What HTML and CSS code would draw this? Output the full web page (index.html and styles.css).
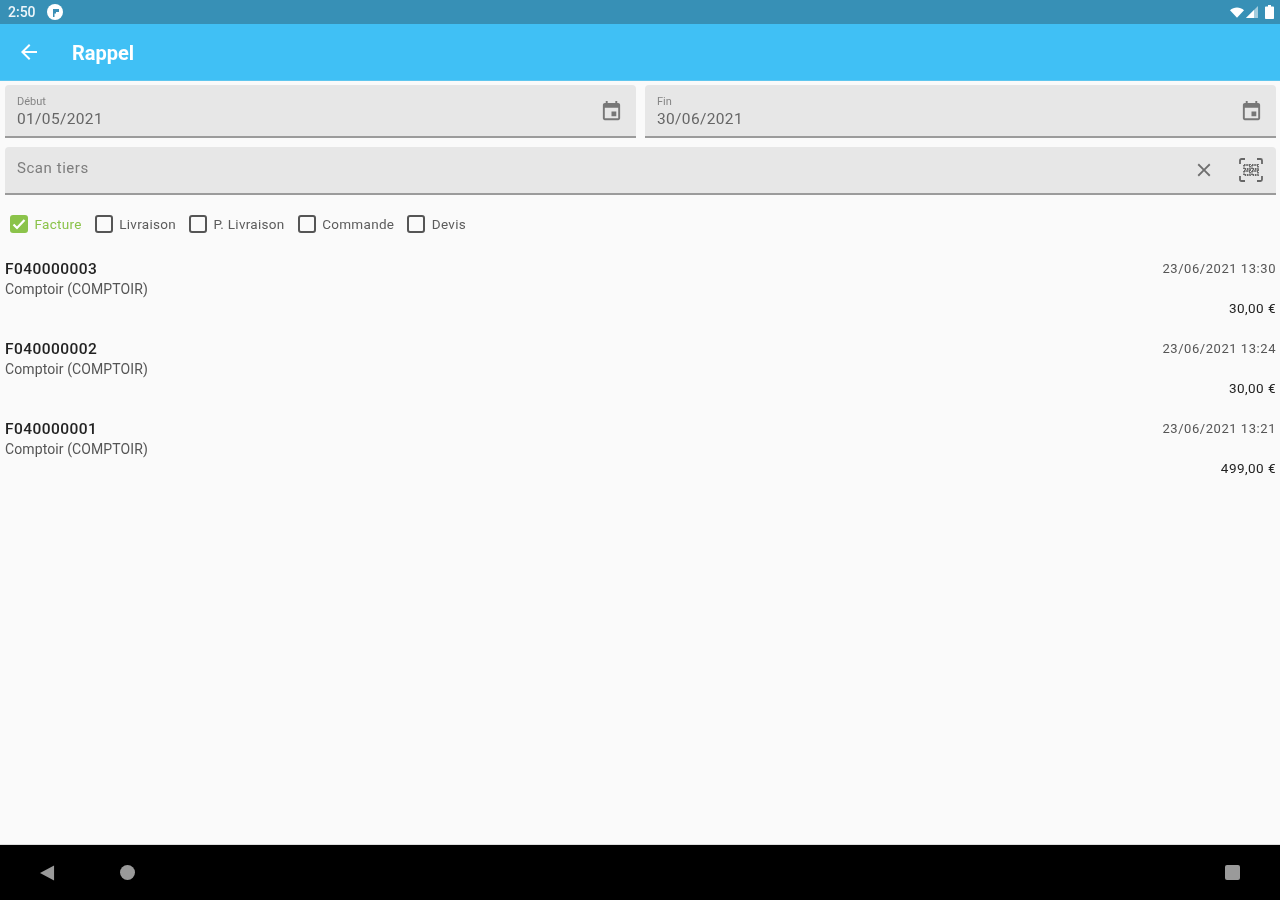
FILE: index.html
```html
<!DOCTYPE html>
<html lang="fr">
<head>
<meta charset="utf-8">
<title>Rappel</title>
<link rel="stylesheet" href="styles.css">
</head>
<body>
<div class="screen">
  <header class="status">
    <div class="status-left">
      <span class="clock">2:50</span>
      <svg class="status-logo" viewBox="0 0 16 16"><circle cx="8" cy="8" r="8" fill="#fff"/><path d="M6 13V5h6v3H9v1.500H7.500V13z" fill="#3b8fb6"/></svg>
    </div>
    <div class="status-right">
      <svg class="ic-wifi" viewBox="0 0 16 12"><path d="M0 3.500C4.500-.8 11.500-.8 16 3.500L8 12z" fill="#fff"/></svg>
      <svg class="ic-signal" viewBox="0 0 12 12"><path d="M12 0v12H0z" fill="#fff" opacity=".55"/><path d="M8 4v8H0z" fill="#fff"/></svg>
      <svg class="ic-batt" viewBox="0 0 9 14"><path d="M3 0h3v1.500h2.200q.8 0 .8.800V13.200q0 .8-.8.800H.8q-.8 0-.8-.8V2.300q0-.8.800-.8H3z" fill="#fff"/></svg>
    </div>
  </header>
  <div class="appbar">
    <svg class="back" viewBox="0 0 24 24"><path d="M20 11H7.830l5.590-5.590L12 4l-8 8 8 8 1.410-1.410L7.830 13H20z" fill="#fff"/></svg>
    <h1 class="title">Rappel</h1>
  </div>
  <main class="content">
    <div class="dates">
      <div class="field">
        <div class="field-text">
          <span class="field-label">Début</span>
          <span class="field-value">01/05/2021</span>
        </div>
        <svg class="ic-cal" viewBox="0 0 24 24"><path d="M17 12h-5v5h5v-5zM16 1v2H8V1H6v2H5c-1.110 0-1.990.9-1.990 2L3 19c0 1.100.89 2 2 2h14c1.100 0 2-.9 2-2V5c0-1.100-.9-2-2-2h-1V1h-2zm3 18H5V8h14v11z" fill="#777"/></svg>
      </div>
      <div class="field">
        <div class="field-text">
          <span class="field-label">Fin</span>
          <span class="field-value">30/06/2021</span>
        </div>
        <svg class="ic-cal" viewBox="0 0 24 24"><path d="M17 12h-5v5h5v-5zM16 1v2H8V1H6v2H5c-1.110 0-1.990.9-1.990 2L3 19c0 1.100.89 2 2 2h14c1.100 0 2-.9 2-2V5c0-1.100-.9-2-2-2h-1V1h-2zm3 18H5V8h14v11z" fill="#777"/></svg>
      </div>
    </div>
    <div class="field field-scan">
      <span class="scan-hint">Scan tiers</span>
      <svg class="ic-close" viewBox="0 0 24 24"><path d="M19 6.410L17.590 5 12 10.590 6.410 5 5 6.410 10.590 12 5 17.590 6.410 19 12 13.410 17.590 19 19 17.590 13.410 12z" fill="#6f6f6f"/></svg>
      <svg class="ic-scan" viewBox="0 0 26 26" fill="none" stroke="#666">
        <path d="M2 7V3.500Q2 2 3.500 2H7M19 2h3.500Q24 2 24 3.500V7M24 19v3.500Q24 24 22.500 24H19M7 24H3.500Q2 24 2 22.500V19" stroke-width="1.800"/>
        <path d="M6 8h6v4H6zM14 8h6v4h-6zM6 14h6v4H6zM14 14h6v4h-6z" stroke-width="1.800" stroke-dasharray="1.500 .8"/>
      </svg>
    </div>
    <div class="checks">
      <label class="check check-on">
        <span class="box box-on"><svg viewBox="0 0 18 18"><path d="M3.500 9.500l3.500 3.500 7.500-8" fill="none" stroke="#fff" stroke-width="2.200"/></svg></span>
        Facture
      </label>
      <label class="check"><span class="box"></span>Livraison</label>
      <label class="check"><span class="box"></span>P. Livraison</label>
      <label class="check"><span class="box"></span>Commande</label>
      <label class="check"><span class="box"></span>Devis</label>
    </div>
    <ul class="list">
      <li class="row">
        <div class="row-top"><span class="ref">F040000003</span><span class="date">23/06/2021 13:30</span></div>
        <div class="client">Comptoir (COMPTOIR)</div>
        <div class="amount">30,00 €</div>
      </li>
      <li class="row">
        <div class="row-top"><span class="ref">F040000002</span><span class="date">23/06/2021 13:24</span></div>
        <div class="client">Comptoir (COMPTOIR)</div>
        <div class="amount">30,00 €</div>
      </li>
      <li class="row">
        <div class="row-top"><span class="ref">F040000001</span><span class="date">23/06/2021 13:21</span></div>
        <div class="client">Comptoir (COMPTOIR)</div>
        <div class="amount">499,00 €</div>
      </li>
    </ul>
  </main>
  <nav class="navbar">
    <div class="nav-left">
      <svg class="nav-back" viewBox="0 0 16 16"><path d="M15 0v16L0 8z" fill="#9a9a9a"/></svg>
      <span class="nav-home"></span>
    </div>
    <span class="nav-recent"></span>
  </nav>
</div>
</body>
</html>
```

FILE: styles.css
```css
* { box-sizing: border-box; }
html, body { margin: 0; padding: 0; }
body { font-family: Roboto, "Liberation Sans", sans-serif; background: #fafafa; }
.screen {
  width: 1280px;
  height: 900px;
  display: flex;
  flex-direction: column;
  background: #fafafa;
  overflow: hidden;
  filter: blur(0.7px);
}
.status {
  height: 24px;
  flex: none;
  background: #3790b6;
  display: flex;
  align-items: center;
  justify-content: space-between;
  padding: 0 6px 0 8px;
  color: #fff;
}
.status-left, .status-right { display: flex; align-items: center; }
.clock { font-size: 14px; width: 39px; color: #eef6fa; font-weight: 500; }
.status-logo { width: 16px; height: 16px; }
.status-right { gap: 2px; }
.ic-wifi { width: 14px; height: 11px; }
.ic-signal { width: 12px; height: 12px; margin-right: 5px; }
.ic-batt { width: 9px; height: 14px; }
.appbar {
  height: 57px;
  flex: none;
  background: #40c0f5;
  border-bottom: 1px solid #5fc6ee;
  display: flex;
  align-items: center;
  padding: 0 0 0 17px;
}
.back { width: 24px; height: 24px; }
.title { margin: 2px 0 0 31px; font-size: 20px; font-weight: 700; color: #fff; }
.content { flex: 1; padding: 4px 4px 0 5px; min-height: 0; }
.dates { display: flex; gap: 9px; margin-bottom: 9px; }
.field {
  flex: 1;
  height: 53px;
  background: #e7e7e7;
  border-bottom: 2px solid #9b9b9b;
  border-radius: 4px 4px 0 0;
  display: flex;
  align-items: center;
  justify-content: space-between;
  padding: 0 12px;
}
.field-text { display: flex; flex-direction: column; padding-top: 2px; }
.field-label { font-size: 11px; line-height: 14px; color: #858585; }
.field-value { font-size: 15.500px; line-height: 20px; color: #666; letter-spacing: 0.35px; }
.ic-cal { width: 23px; height: 23px; margin: 1px 1px 0 0; }
.field-scan { height: 48px; justify-content: flex-start; padding-bottom: 4px; }
.scan-hint { font-size: 15px; color: #7d7d7d; flex: 1; letter-spacing: 0.55px; }
.ic-close { width: 22px; height: 22px; margin: 4px 23px 0 0; }
.ic-scan { width: 26px; height: 26px; margin: 4px 0 0 0; }
.checks {
  display: flex;
  align-items: center;
  height: 20px;
  margin-top: 19px;
  padding-left: 5px;
}
.check {
  display: flex;
  align-items: center;
  font-size: 13.500px;
  letter-spacing: 0.3px;
  color: #5c5c5c;
  margin-right: 13px;
}
.check-on { color: #8bc34a; }
.box {
  width: 18px;
  height: 18px;
  border: 2px solid #555;
  border-radius: 3px;
  margin-right: 6.500px;
  flex: none;
}
.box-on { background: #8bc34a; border: 0; }
.box-on svg { display: block; width: 18px; height: 18px; }
.list { list-style: none; margin: 14px 0 0; padding: 0; }
.row { height: 80px; padding-top: 11px; }
.row-top { display: flex; justify-content: space-between; align-items: center; height: 20px; }
.ref { font-size: 15.500px; letter-spacing: 0.45px; color: #222; font-weight: 500; }
.date { font-size: 13px; letter-spacing: 0.55px; color: #555; margin-top: -1px; }
.client { font-size: 14px; line-height: 20px; letter-spacing: 0.1px; color: #555; }
.amount { font-size: 13.500px; line-height: 20px; margin-top: -1px; text-align: right; color: #222; letter-spacing: 0.45px; }
.navbar {
  height: 56px;
  flex: none;
  background: #000;
  border-top: 1px solid #ddd;
  display: flex;
  align-items: center;
  justify-content: space-between;
  padding: 0 40px;
}
.nav-left { display: flex; align-items: center; gap: 65px; }
.nav-back { width: 15px; height: 16px; }
.nav-home { width: 15px; height: 15px; border-radius: 50%; background: #9a9a9a; }
.nav-recent { width: 15px; height: 15px; border-radius: 2px; background: #9a9a9a; }
```
